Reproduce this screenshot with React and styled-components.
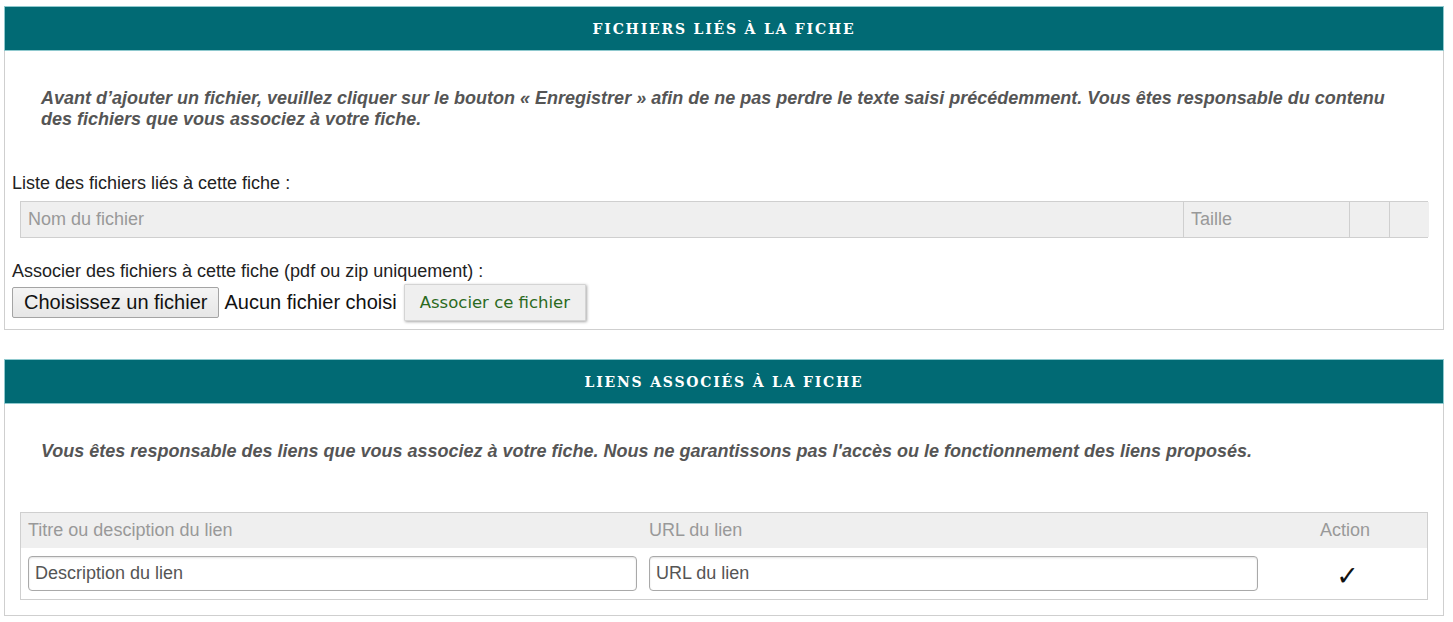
import React from "react";
import styled, { createGlobalStyle } from "styled-components";

const Global = createGlobalStyle`
  html, body { margin: 0; padding: 0; background: #fff; }
  body { font-family: "Liberation Sans", Arial, sans-serif; color: #222; }
`;

const Page = styled.div`
  padding: 6px 0 0 4px;
  display: flex;
  flex-direction: column;
  gap: 29px;
`;

const Panel = styled.section`
  width: 1440px;
  box-sizing: border-box;
  border: 1px solid #cfcfcf;
  border-top: none;
  padding-bottom: ${(p) => p.$pb}px;
`;

const Header = styled.h2`
  margin: 0 -1px;
  height: 45px;
  box-sizing: border-box;
  background: #016a74;
  border: 1px solid #8fc9ce;
  color: #fff;
  display: flex;
  align-items: center;
  justify-content: center;
  font-family: "DejaVu Serif", "Liberation Serif", serif;
  font-weight: bold;
  font-size: 14px;
  letter-spacing: 1.8px;
  padding-top: 1px;
`;

const Notice = styled.p`
  margin: ${(p) => p.$mt}px 36px 0 36px;
  font-size: 18px;
  line-height: 21px;
  font-weight: bold;
  font-style: italic;
  color: #555;
`;

const Label = styled.div`
  margin: ${(p) => p.$mt}px 0 0 7px;
  font-size: 18px;
  line-height: 18px;
  color: #222;
`;

const Table = styled.div`
  margin: ${(p) => p.$mt}px 15px 0 15px;
  border: 1px solid #cfcfcf;
  display: grid;
  grid-template-columns: ${(p) => p.$cols};
`;

const HeadCell = styled.div`
  background: #efefef;
  height: ${(p) => p.$h}px;
  box-sizing: border-box;
  display: flex;
  align-items: center;
  justify-content: ${(p) => (p.$center ? "center" : "flex-start")};
  padding: 0 7px;
  color: #999;
  font-size: 18px;
  border-left: ${(p) => (p.$sep ? "1px solid #cfcfcf" : "none")};
`;

const BodyCell = styled.div`
  height: 51px;
  box-sizing: border-box;
  display: flex;
  align-items: center;
  justify-content: ${(p) => (p.$center ? "center" : "flex-start")};
  padding: 0 5px 0 7px;
`;

const TextInput = styled.input`
  width: 100%;
  height: 35px;
  box-sizing: border-box;
  border: 1px solid #a9a9a9;
  border-radius: 4px;
  box-shadow: inset 0 1px 2px rgba(0, 0, 0, 0.12);
  padding: 0 6px;
  font-family: "Liberation Sans", Arial, sans-serif;
  font-size: 18px;
  color: #333;
  &::placeholder { color: #555; }
`;

const Check = styled.span`
  font-family: "DejaVu Sans", sans-serif;
  font-size: 27px;
  font-weight: bold;
  color: #111;
  margin: 4px 0 0 3px;
`;

const FileRow = styled.div`
  margin: 4px 0 0 7px;
  display: flex;
  align-items: center;
`;

const PickButton = styled.button`
  height: 31px;
  box-sizing: border-box;
  padding: 0 11px;
  font-family: "Liberation Sans", Arial, sans-serif;
  font-size: 20px;
  color: #111;
  background: linear-gradient(#f4f4f4, #e6e6e6);
  border: 1px solid #a4a4a4;
  border-radius: 2px;
`;

const NoFile = styled.span`
  font-size: 20px;
  color: #111;
  margin: 0 7px 0 5px;
`;

const AssocButton = styled.button`
  height: 37px;
  box-sizing: border-box;
  padding: 0 15px;
  font-family: "DejaVu Sans", Verdana, sans-serif;
  font-size: 16.5px;
  color: #2b6a1e;
  background: #efefef;
  border: 1px solid #d4d4d4;
  border-radius: 1px;
  box-shadow: 1px 1px 3px rgba(0, 0, 0, 0.35);
`;

export default function App() {
  return (
    <>
      <Global />
      <Page>
        <Panel $pb={8}>
          <Header>FICHIERS LIÉS À LA FICHE</Header>
          <Notice $mt={37}>
            Avant d’ajouter un fichier, veuillez cliquer sur le bouton « Enregistrer » afin de ne pas perdre le texte saisi précédemment. Vous êtes responsable du contenu des fichiers que vous associez à votre fiche.
          </Notice>
          <Label $mt={44}>Liste des fichiers liés à cette fiche :</Label>
          <Table $mt={9} $cols="1162px 166px 40px 40px">
            <HeadCell $h={35}>Nom du fichier</HeadCell>
            <HeadCell $h={35} $sep>Taille</HeadCell>
            <HeadCell $h={35} $sep />
            <HeadCell $h={35} $sep />
          </Table>
          <Label $mt={24}>Associer des fichiers à cette fiche (pdf ou zip uniquement) :</Label>
          <FileRow>
            <PickButton type="button">Choisissez un fichier</PickButton>
            <NoFile>Aucun fichier choisi</NoFile>
            <AssocButton type="button">Associer ce fichier</AssocButton>
          </FileRow>
        </Panel>
        <Panel $pb={15}>
          <Header>LIENS ASSOCIÉS À LA FICHE</Header>
          <Notice $mt={37}>
            Vous êtes responsable des liens que vous associez à votre fiche. Nous ne garantissons pas l'accès ou le fonctionnement des liens proposés.
          </Notice>
          <Table $mt={50} $cols="621px 621px 1fr">
            <HeadCell $h={35}>Titre ou desciption du lien</HeadCell>
            <HeadCell $h={35}>URL du lien</HeadCell>
            <HeadCell $h={35} $center>Action</HeadCell>
            <BodyCell>
              <TextInput placeholder="Description du lien" />
            </BodyCell>
            <BodyCell>
              <TextInput placeholder="URL du lien" />
            </BodyCell>
            <BodyCell $center>
              <Check>✓</Check>
            </BodyCell>
          </Table>
        </Panel>
      </Page>
    </>
  );
}
